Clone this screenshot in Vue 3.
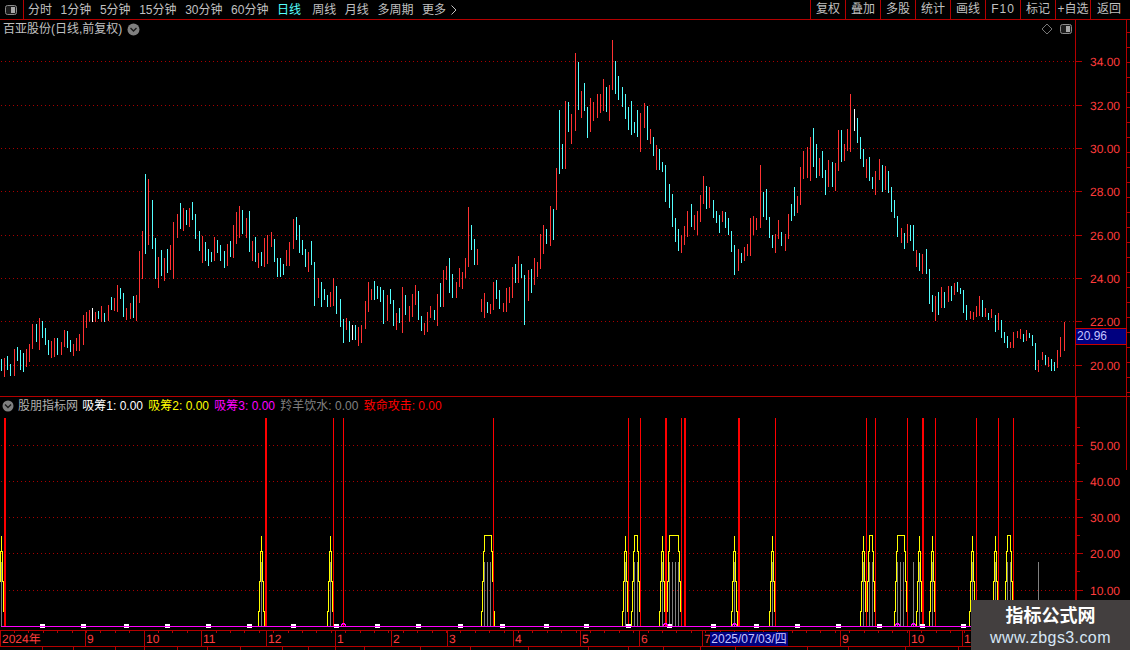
<script setup>
const segs = [
  [0, 170, `4 567 603 c;13 564 621 r;22 558 600 c;31 582 618 c;43 537 618 r;52 531 573 c;61 540 600 c;70 549 606 c;79 537 591 r;88 522 576 r;97 462 537 r;109 462 516 c;118 444 540 r;127 453 504 c;136 474 525 c;145 510 555 c;154 513 564 r;163 504 561 r;172 504 555 c;184 516 555 r;193 480 531 r;202 483 534 c;211 510 546 c;220 522 558 r;229 504 543 r;238 492 543 r;250 435 525 r;259 426 474 r;268 420 456 r;277 414 456 w;286 426 456 r;295 423 447 c;304 408 456 r;313 429 456 c;325 405 453 r;334 381 420 c;343 384 423 r;352 345 426 r;361 354 387 c;370 369 441 c;379 414 450 r;391 399 447 r;400 378 444 c;409 375 453 r;418 243 399 r;427 183 327 r;436 12 252 c;445 27 225 r;457 90 237 c;466 204 327 c;475 261 354 r;484 240 318 c;493 264 333 r;502 237 309 c;511 225 300 r;520 156 327 r;532 132 204 r;541 99 177 c;550 114 183 r;559 120 165 c;568 114 171 r;577 96 150 c;586 132 207 c;598 183 243 c;607 198 279 r;616 216 273 c;625 237 288 c;634 246 276 c;643 201 273 r;652 210 249 c;661 225 273 c;673 243 294 c;682 222 288 r;691 213 261 c;700 165 264 r;709 126 222 r;718 108 204 r;727 120 192 c;739 144 204 r;748 123 246 c;757 213 273 r;766 201 276 c;775 249 294 r`],
  [260, 170, `4 246 288 c;13 204 291 r;22 195 282 r;34 186 231 r;43 207 276 c;52 264 321 c;61 264 321 c;70 282 315 c;79 240 288 r;88 216 288 r;100 147 237 r;109 141 210 c;118 165 249 c;127 210 255 c;136 237 291 c;145 246 306 r;154 213 285 c;163 276 408 c;175 324 384 r;184 336 411 c;193 357 390 c;202 375 411 c;211 366 411 r;220 325 408 r;229 348 432 c;241 387 471 c;250 447 519 c;259 444 480 r;268 453 516 c;277 465 510 w;286 465 510 c;295 471 528 r;304 465 519 r;316 393 477 r;325 336 426 r;334 357 390 r;343 333 390 c;352 348 387 c;361 351 396 c;370 360 462 c;382 375 453 r;391 357 402 c;400 390 468 c;409 429 480 r;418 414 459 c;427 351 489 r;436 375 435 c;448 408 456 r;457 372 441 r;466 345 405 r;475 363 450 c;484 438 483 c;493 459 495 r;502 426 486 r;511 408 444 r;523 420 450 c;532 372 468 r;541 339 411 c;550 300 411 r;559 288 330 r;568 264 369 c;577 312 384 c;589 336 384 r;598 294 351 r;607 306 357 r;616 264 324 r;625 111 291 r;634 165 240 c;643 207 285 c;652 237 285 r;664 387 426 r;673 369 444 r;682 396 429 c;691 402 432 r;700 336 420 r;709 330 387 c;718 360 417 c;730 399 426 r;739 354 426 r;748 351 399 r;757 291 384 r;766 282 339 c;775 258 339 r;784 282 324 c;793 315 465 c;805 300 393 r;814 297 369 c;823 264 345 r;832 276 321 r`],
  [540, 30, `1 612 717 r;10 585 672 r;19 597 642 c;31 528 648 r;40 537 630 c;49 414 540 r;58 240 432 c;67 342 417 c;76 213 417 r;85 216 306 c;94 252 342 r;106 69 303 r;115 96 240 c;124 183 264 r;133 159 243 c;142 231 324 c;151 204 306 r;160 216 273 r;172 192 264 r;181 192 249 r;190 147 243 r;199 171 246 c;208 165 273 r;217 30 180 r;226 93 192 c;235 138 210 c;247 171 231 c;256 192 267 c;265 231 300 c;274 213 315 c;283 276 309 c;292 240 321 c;301 249 366 r;313 219 294 r;322 228 330 c;331 297 342 r;340 321 378 c;349 345 420 r;358 357 420 c;367 396 426 c;376 405 516 c;388 462 534 c;397 492 591 c;406 564 636 c;415 597 663 c;424 615 669 r;433 588 645 r;442 543 621 r;454 522 591 c;463 555 600 r;472 543 615 r;481 495 576 r;490 438 522 r;499 468 537 c;508 471 534 r;520 510 564 c;529 543 579 c;538 555 609 c;547 543 576 r;556 546 594 c;565 564 615 c;574 603 666 c;583 645 735 c;595 657 723 r;604 669 699 c;613 651 693 r;622 642 678 r;631 564 678 r;640 558 615 r;649 564 600 r;661 405 594 r;670 486 561 c;679 477 570 c;688 561 624 c;697 615 654 c;706 612 669 r;715 570 627 r;724 606 648 c;736 612 663 r;745 552 627 r;754 522 573 c;763 471 558 c;772 498 549 r`],
  [790, 80, `31 261 375 r;40 213 297 r;52 201 294 r;61 171 303 r;70 144 261 c;79 192 294 c;88 234 288 r;97 213 294 c;106 270 345 c;115 240 321 r;127 246 321 c;136 249 333 r;145 150 273 r;154 150 246 c;163 192 243 r;172 147 213 r;181 42 216 r;193 87 153 w;202 114 189 c;211 171 237 c;220 207 261 c;229 237 294 r;238 231 303 c;247 291 327 c;256 273 345 r;268 237 300 r;277 255 336 c;286 258 330 r;295 273 339 c;304 321 396 c;313 360 414 c;322 408 471 c;334 444 489 r;343 459 507 c;352 432 489 r;361 435 483 c;370 435 513 c;379 510 561 r;388 519 573 c;397 522 582 r;409 507 582 c;418 567 672 c;427 645 696 c;436 648 723 r;445 636 705 c;454 621 684 r;463 636 684 c;475 618 666 r;484 618 663 c;493 609 645 r;502 606 636 c;511 624 642 c;520 630 699 c;529 675 720 c;541 693 717 r;550 696 720 r;559 678 711 r;568 648 708 r;577 660 711 c;586 684 711 r;595 699 720 c;604 687 714 r;616 705 756 c;625 699 750 r;634 720 774 c;643 756 789 c;652 768 804 c;661 786 804 r;670 756 804 r;682 753 774 r;691 747 777 r;700 762 786 c;709 750 783 r;718 759 774 c;727 765 798 c;736 789 870 c;745 840 876 r;757 816 840 r;766 825 855 c;775 831 861 r;784 837 873 c;793 846 873 c;802 810 864 r;811 771 831 r;823 726 813 r`],
]
const candleColor = { r: '#ff3232', c: '#54ffff', w: '#ffffff' }
const candles = segs.flatMap(([ox, oy, s]) =>
  s.split(';').map((item) => {
    const [x, t, b, c] = item.split(' ')
    const top = Math.round(oy + t / 3)
    return { x: Math.floor(ox + x / 3), y: top, h: Math.round(oy + b / 3) - top, fill: candleColor[c] }
  })
)

const periods = ['分时', '1分钟', '5分钟', '15分钟', '30分钟', '60分钟', '日线', '周线', '月线', '多周期']
const actions = ['复权', '叠加', '多股', '统计', '画线', 'F10', '标记', '+自选', '返回']

const priceTicks = [
  [61, '34.00'], [105, '32.00'], [148, '30.00'], [191, '28.00'],
  [235, '26.00'], [278, '24.00'], [321, '22.00'], [365, '20.00'],
]
const signalTicks = [
  [445, '50.00'], [481, '40.00'], [517, '30.00'], [553, '20.00'], [590, '10.00'],
]
const minorTicks = [463, 499, 535, 571, 427, 608]
const farTicks = [32, 47, 62, 77, 92, 107, 122, 137, 152, 167, 182, 197, 212, 227, 242, 257, 272, 287, 302, 317, 332, 347, 362, 377, 392, 420, 435, 450]

const thick = [4, 265, 665, 684, 738, 922]
const thin = [333, 343, 493, 628, 640, 681, 775, 866, 875, 907, 935, 976, 998, 1013]

const peaks = [
  [1, 1], [261, 261], [330, 330], [484, 491], [625, 625], [634, 637], [662, 662],
  [669, 678], [734, 734], [772, 772], [863, 863], [869, 872], [897, 904], [919, 919],
  [932, 932], [972, 972], [995, 995], [1007, 1010],
]
const stairPath = ([a, b]) => {
  const p = (n) => n + 0.5
  return `M${p(a - 3)} 626V611.5H${p(a - 2)}V581.5H${p(a - 1)}V551.5H${p(a)}V535.5H${p(b)}V551.5H${p(b + 1)}V581.5H${p(b + 2)}V611.5H${p(b + 3)}V626`
}
const grayBars = [913, 1038]
peaks.forEach(([a, b]) => {
  for (let x = a; x <= b; x += 3) grayBars.push(x)
})
const arcs = [343, 665, 734, 897, 913]
const whiteMarks = [42, 83, 126, 167, 208, 249, 293, 336, 377, 418, 460, 502, 546, 586, 628, 669, 713, 756, 797, 838, 879, 922, 963]

const months = [
  [0, '2024年'], [85, '9'], [144, '10'], [201, '11'], [266, '12'], [335, '1'], [391, '2'],
  [447, '3'], [513, '4'], [580, '5'], [639, '6'], [702, '7'], [840, '9'], [909, '10'], [962, '1'],
]
const timeTicks = []
for (let x = 14; x < 1075; x += 14.4) timeTicks.push(Math.round(x))
const lowerSeps = [42, 73, 115, 144, 177, 207, 240, 282, 308, 335, 364, 420, 470, 528, 588, 628, 663, 700, 735, 807, 848, 905, 958]
</script>

<template>
  <div class="screen">
    <header class="toolbar">
      <div class="panel-toggle">
        <svg width="12" height="10" viewBox="0 0 12 10">
          <rect x="0.5" y="0.5" width="11" height="9" rx="2" fill="#1c1c1c" stroke="#8a8a8a" />
          <rect x="6" y="2" width="4" height="6" fill="#a8a8a8" />
        </svg>
      </div>
      <nav class="periods">
        <span v-for="p in periods" :key="p" :class="{ active: p === '日线', wide: p === '周线' }">{{ p }}</span>
        <span class="more">更多
          <svg width="6" height="10" viewBox="0 0 6 10"><path d="M0.5 0.5L5 5L0.5 9.5" fill="none" stroke="#c0c0c0" /></svg>
        </span>
      </nav>
      <div class="actions">
        <span v-for="a in actions" :key="a" class="action" :class="{ spaced: a === 'F10' }">{{ a }}</span>
      </div>
    </header>

    <section class="price-panel">
      <svg class="canvas" width="1130" height="376" viewBox="0 20 1130 376" shape-rendering="crispEdges">
        <line v-for="t in priceTicks" :key="t[0]" x1="1" x2="1075" :y1="t[0] + 0.5" :y2="t[0] + 0.5" class="grid" />
        <rect v-for="(c, i) in candles" :key="i" :x="c.x" :y="c.y" width="1" :height="c.h" :fill="c.fill" />
        <line x1="1075.5" x2="1075.5" y1="20" y2="396" class="axis" />
        <line x1="1126.5" x2="1126.5" y1="20" y2="396" class="axis" />
        <line v-for="t in farTicks" :key="'f' + t" x1="1127" x2="1130" :y1="t + 0.5" :y2="t + 0.5" class="axis" />
        <line v-for="t in priceTicks" :key="'t' + t[0]" x1="1076" x2="1082" :y1="t[0] + 0.5" :y2="t[0] + 0.5" class="axis" />
        <text v-for="t in priceTicks" :key="'l' + t[0]" x="1120" :y="t[0] + 4.5" text-anchor="end" class="axis-label">{{ t[1] }}</text>
      </svg>
      <div class="stock-title">
        <span>百亚股份(日线,前复权)</span>
        <svg width="13" height="13" viewBox="0 0 13 13">
          <circle cx="6.5" cy="6.5" r="6" fill="#808080" />
          <path d="M3.5 5L6.5 8L9.5 5" fill="none" stroke="#1a1a1a" stroke-width="1.4" />
        </svg>
      </div>
      <div class="chart-tools">
        <svg width="12" height="12" viewBox="0 0 12 12"><path d="M6 1L11 6L6 11L1 6Z" fill="none" stroke="#777" /></svg>
        <svg width="12" height="10" viewBox="0 0 12 10">
          <rect x="0.5" y="0.5" width="11" height="9" rx="2" fill="#1c1c1c" stroke="#8a8a8a" />
          <rect x="6" y="2" width="4" height="6" fill="#a8a8a8" />
        </svg>
      </div>
      <div class="last-price">20.96</div>
    </section>

    <section class="signal-panel">
      <svg class="canvas" width="1130" height="233" viewBox="0 397 1130 233" shape-rendering="crispEdges">
        <line v-for="t in signalTicks" :key="t[0]" x1="1" x2="1075" :y1="t[0] + 0.5" :y2="t[0] + 0.5" class="grid" />
        <rect v-for="(x, i) in grayBars" :key="'g' + i" :x="x" y="562" width="1" height="64" fill="#808080" />
        <path v-for="(p, i) in peaks" :key="'p' + i" :d="stairPath(p)" fill="none" stroke="#ffff00" />
        <rect v-for="x in thin" :key="'n' + x" :x="x" y="418" width="1" height="208" fill="#ff0000" />
        <rect v-for="x in thick" :key="'k' + x" :x="x" y="418" width="2" height="208" fill="#ff0000" />
        <rect v-for="x in whiteMarks" :key="'w' + x" :x="x - 2" y="624" width="5" height="4" fill="#ffffff" />
        <rect x="1" y="626" width="1074" height="1" fill="#ff00ff" />
        <path v-for="x in arcs" :key="'a' + x" :d="`M${x - 2} 626V624H${x - 1}V623H${x + 1}V624H${x + 2}V626`" fill="none" stroke="#ff00ff" />
        <rect x="1075" y="397" width="2" height="233" class="axis-fill" />
        <line x1="1126.5" x2="1126.5" y1="397" y2="470" class="axis" />
        <line v-for="t in signalTicks" :key="'t' + t[0]" x1="1077" x2="1083" :y1="t[0] + 0.5" :y2="t[0] + 0.5" class="axis" />
        <line v-for="t in minorTicks" :key="'m' + t" x1="1077" x2="1080" :y1="t + 0.5" :y2="t + 0.5" class="axis" />
        <text v-for="t in signalTicks" :key="'l' + t[0]" x="1120" :y="t[0] + 4.5" text-anchor="end" class="axis-label">{{ t[1] }}</text>
      </svg>
      <div class="legend">
        <svg width="12" height="12" viewBox="0 0 12 12">
          <circle cx="6" cy="6" r="5.5" fill="#808080" />
          <path d="M3 4.5L6 7.5L9 4.5" fill="none" stroke="#1a1a1a" stroke-width="1.4" />
        </svg>
        <span class="l-name">股朋指标网</span>
        <span class="l-white">吸筹1: 0.00</span>
        <span class="l-yellow">吸筹2: 0.00</span>
        <span class="l-magenta">吸筹3: 0.00</span>
        <span class="l-gray">羚羊饮水: 0.00</span>
        <span class="l-red">致命攻击: 0.00</span>
      </div>
    </section>

    <footer class="time-axis">
      <svg class="canvas" width="1130" height="19" viewBox="0 631 1130 19" shape-rendering="crispEdges">
        <line v-for="t in timeTicks" :key="t" :x1="t + 0.5" :x2="t + 0.5" y1="631" y2="633" class="axis" />
        <line v-for="m in months" :key="'s' + m[0]" :x1="m[0] + 0.5" :x2="m[0] + 0.5" y1="631" y2="646" class="axis" />
        <text v-for="m in months" :key="'t' + m[0]" :x="m[0] + 2" y="643" class="axis-label">{{ m[1] }}</text>
        <line x1="0" x2="1130" y1="646.5" y2="646.5" class="axis" />
        <line v-for="s in lowerSeps" :key="'b' + s" :x1="s + 0.5" :x2="s + 0.5" y1="647" y2="650" class="axis" />
      </svg>
      <div class="cursor-date">2025/07/03/四</div>
    </footer>

    <aside class="watermark">
      <strong>指标公式网</strong>
      <span>www.zbgs3.com</span>
    </aside>
  </div>
</template>

<style scoped>
.screen {
  position: relative;
  width: 1130px;
  height: 650px;
  overflow: hidden;
  display: flex;
  flex-direction: column;
  background: #000;
  font: 12px/14px "Liberation Sans", "Noto Sans CJK SC", sans-serif;
  color: #c0c0c0;
}
.toolbar {
  display: flex;
  flex: 0 0 20px;
  box-sizing: border-box;
  border-bottom: 1px solid #b40000;
}
.panel-toggle {
  display: flex;
  align-items: center;
  box-sizing: border-box;
  width: 24px;
  padding-left: 5px;
  border-right: 1px solid #b40000;
}
.periods {
  display: flex;
  align-items: center;
  gap: 8.6px;
  padding-left: 4px;
  flex: 1;
}
.periods .active {
  color: #54ffff;
}
.periods .wide {
  margin-left: 2.6px;
}
.more {
  display: flex;
  align-items: center;
  gap: 5px;
}
.actions {
  display: flex;
}
.action {
  box-sizing: border-box;
  width: 35px;
  text-align: center;
  line-height: 19px;
  border-left: 1px solid #b40000;
}
.action.spaced {
  letter-spacing: 1px;
}
.action:last-child {
  width: 40px;
  padding-right: 3px;
}
.price-panel,
.signal-panel,
.time-axis {
  position: relative;
  box-sizing: border-box;
}
.price-panel {
  flex: 0 0 377px;
  border-bottom: 1px solid #b40000;
}
.signal-panel {
  flex: 0 0 234px;
  border-bottom: 1px solid #b40000;
}
.time-axis {
  flex: 0 0 19px;
}
.canvas {
  display: block;
}
.grid {
  stroke: #a80000;
  stroke-dasharray: 1 3;
}
.axis {
  stroke: #b40000;
}
.axis-fill {
  fill: #b40000;
}
.axis-label {
  fill: #ff3c3c;
  font: 12px "Liberation Sans", "Noto Sans CJK SC", sans-serif;
  text-rendering: geometricPrecision;
}
.stock-title {
  position: absolute;
  left: 3px;
  top: 2px;
  display: flex;
  align-items: center;
  gap: 5px;
  height: 14px;
}
.chart-tools {
  position: absolute;
  left: 1041px;
  top: 3px;
  display: flex;
  align-items: center;
  gap: 7px;
}
.last-price {
  position: absolute;
  left: 1075px;
  top: 308px;
  box-sizing: border-box;
  width: 52px;
  height: 17px;
  padding-left: 1px;
  border: 1px solid #c80000;
  background: #00007f;
  color: #c4c4ff;
  line-height: 15px;
}
.legend {
  position: absolute;
  left: 2px;
  top: 2px;
  display: flex;
  align-items: center;
  gap: 5.3px;
  height: 14px;
  white-space: nowrap;
}
.legend svg {
  margin-right: -1.3px;
}
.l-name {
  color: #b0b0b0;
  margin-right: -1px;
}
.l-white {
  color: #ffffff;
}
.l-yellow {
  color: #ffff00;
}
.l-magenta {
  color: #ff00ff;
}
.l-gray {
  color: #808080;
}
.l-red {
  color: #ff0000;
}
.cursor-date {
  position: absolute;
  left: 710px;
  top: 1px;
  width: 78px;
  height: 14px;
  background: #00007f;
  color: #c4c4ff;
  text-align: center;
  white-space: nowrap;
}
.watermark {
  position: absolute;
  right: 0;
  bottom: 0;
  width: 159px;
  height: 50px;
  display: flex;
  flex-direction: column;
  align-items: center;
  background: #433f3f;
  font-family: "Liberation Sans", "Noto Sans CJK SC", sans-serif;
}
.watermark strong {
  margin-top: 5px;
  font-size: 18px;
  line-height: 22px;
  color: #ffffff;
}
.watermark span {
  margin-top: 1px;
  font-size: 16px;
  line-height: 20px;
  letter-spacing: 0.4px;
  color: #d6e6f5;
}
</style>

<style>
html,
body {
  margin: 0;
  background: #000;
}
</style>
